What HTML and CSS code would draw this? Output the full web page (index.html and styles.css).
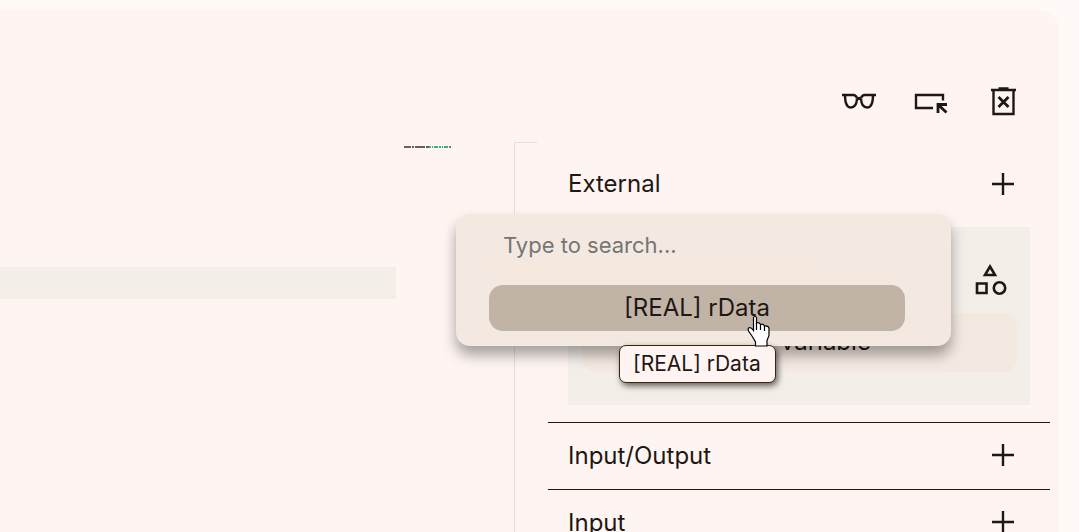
FILE: index.html
```
<!DOCTYPE html>
<html lang="en">
<head>
  <meta charset="UTF-8" />
  <meta name="viewport" content="width=device-width, initial-scale=1" />
  <title>Variables</title>
  <link rel="stylesheet" href="styles.css">
</head>
<body>

  <main class="panel">
    <!-- Toolbar -->
    <div class="toolbar">
      <button class="icon-button" aria-label="View">
        <svg width="36" height="36" viewBox="0 0 36 36" fill="none" stroke="#1f1713" stroke-width="2.4">
          <path d="M1 12h11.500c1.500 0 2.500 .8 3.300 2.800M35 12H23.500c-1.500 0-2.500 .8-3.300 2.800" />
          <path d="M4 12c0 8 1.500 12.500 5.800 12.500 4.500 0 6-4.500 6.200-9M32 12c0 8-1.500 12.500-5.800 12.500-4.500 0-6-4.500-6.200-9" />
          <path d="M15.500 15.500h5" stroke-width="3.200" />
        </svg>
      </button>
      <button class="icon-button" aria-label="Select block">
        <svg width="36" height="36" viewBox="0 0 36 36" fill="none" stroke="#1f1713" stroke-width="2.400">
          <path d="M20 25H3V12h27v5.500" />
          <path d="M25 30v-8.500h9M25.500 22l8 7.500" stroke-width="2.800" />
        </svg>
      </button>
      <button class="icon-button" aria-label="Delete">
        <svg width="36" height="36" viewBox="0 0 36 36" fill="none" stroke="#1f1713" stroke-width="2.400">
          <path d="M6 7h25M13.500 5.500h10M8.500 7v24h20V7" />
          <path d="M13.500 14l10 10M23.500 14l-10 10" stroke-width="2.800" />
        </svg>
      </button>
    </div>

    <div class="workspace">
      <!-- Editor -->
      <div class="editor">
        <div class="code">
          <div class="current-line"></div>
        </div>
        <div class="minimap">
          <svg width="48" height="4" viewBox="0 0 48 4" fill="none" stroke-width="2">
            <path d="M0 2h25" stroke="#6b5f5b" stroke-dasharray="7 1 2 1 10 1 5 1" />
            <path d="M25 2h21" stroke="#3fae84" stroke-dasharray="2 1 1 1 4 1" />
            <path d="M46 2h1" stroke="#6b5f5b" />
          </svg>
        </div>
        <div class="ruler"></div>
      </div>

      <!-- Variable sections -->
      <aside class="sidebar">
        <section class="group">
          <div class="group-header first">
            <span>External</span>
            <button class="add" aria-label="Add external">
              <svg width="24" height="24" viewBox="0 0 24 24" stroke="#1f1713" stroke-width="2.400"><path d="M12 1v22M1 12h22" /></svg>
            </button>
          </div>

          <div class="group-body">
            <button class="icon-button shapes" aria-label="Type">
              <svg width="36" height="36" viewBox="0 0 36 36" fill="none" stroke="#1f1713" stroke-width="2.600">
                <path d="M17 5.500l5 8.500H12zM4 22.500h9.500v9.500H4z" />
                <circle cx="26.500" cy="27" r="5.700" />
              </svg>
            </button>
            <button class="variable">Add variable</button>
          </div>

          <div class="popup">
            <input type="text" class="search" placeholder="Type to search..." aria-label="Search variables" />
            <button class="option">[REAL] rData</button>
            <div class="tooltip" role="tooltip">[REAL] rData</div>
            <svg class="cursor" width="24" height="32" viewBox="0 0 24 32" fill="#fff" stroke="#000" stroke-width="1.200">
              <path d="M6.500 2.500q1.500-2.500 3 0V8q2.500-1 4 1.500 2.500-1 4 1.500 4-.5 4.500 2.500v7l-2 5v5.500H8.500V27L5 21 1.500 16q-1-3 1-3.500 2 0 4 3z" />
              <path d="M9.500 8v7M13.500 9.500V15M17.500 11v5" />
            </svg>
          </div>
        </section>

        <section class="group">
          <div class="group-header">
            <span>Input/Output</span>
            <button class="add" aria-label="Add input/output">
              <svg width="24" height="24" viewBox="0 0 24 24" stroke="#1f1713" stroke-width="2.400"><path d="M12 1v22M1 12h22" /></svg>
            </button>
          </div>
        </section>

        <section class="group">
          <div class="group-header">
            <span>Input</span>
            <button class="add" aria-label="Add input">
              <svg width="24" height="24" viewBox="0 0 24 24" stroke="#1f1713" stroke-width="2.400"><path d="M12 1v22M1 12h22" /></svg>
            </button>
          </div>
        </section>
      </aside>
    </div>
  </main>

</body>
</html>
```
FILE: styles.css
```
body {
  margin: 0;
  height: 100vh;
  overflow: hidden;
  background: #fffaf7;
  color: #1f1713;
  font-family: Inter, sans-serif;
  font-size: 24px;
}

button, input {
  margin: 0;
  padding: 0;
  border: none;
  background: none;
  color: inherit;
  font: inherit;
}

button {
  cursor: pointer;
}

svg {
  display: block;
}

.panel {
  box-sizing: border-box;
  min-height: 100%;
  margin: 10px 20px 0 0;
  padding-right: 9px;
  border-top-right-radius: 20px;
  background: #fef5f2;
}

/* Toolbar */
.toolbar {
  display: flex;
  justify-content: flex-end;
  gap: 36px;
  padding: 73px 29px 23px 0;
}

/* Editor */
.workspace {
  display: grid;
  grid-template-columns: minmax(0, 1fr) 502px;
  gap: 11px;
}

.editor {
  display: grid;
  grid-template-columns: minmax(0, 1fr) 110px 23px;
}

.code {
  margin-right: 8px;
  padding-top: 125px;
}

.current-line {
  height: 32px;
  background: #f3eee8;
}

.minimap {
  padding-top: 3px;
}

.ruler {
  box-sizing: border-box;
  border-top: 1px solid #e5dfdc;
  border-left: 1px solid #e5dfdc;
}

/* Sidebar */
.group {
  position: relative;
}

.group + .group {
  border-top: 1px solid #2a1506;
}

.group-header {
  box-sizing: border-box;
  display: flex;
  justify-content: space-between;
  align-items: center;
  height: 66px;
  padding: 0 35px 2px 20px;
}

.group-header.first {
  height: 85px;
}

.group-body {
  box-sizing: border-box;
  display: flex;
  flex-direction: column;
  gap: 16px;
  margin: 0 20px 17px;
  padding: 34px 13px 33px 14px;
  background: #f3eee8;
}

.shapes {
  align-self: flex-end;
  margin-right: 8px;
}

.variable {
  height: 59px;
  padding-bottom: 2px;
  border-radius: 14px;
  background: #f3e9e0;
}

/* Search popup */
.popup {
  box-sizing: border-box;
  position: absolute;
  top: 72px;
  right: 99px;
  width: 495px;
  padding: 8px 46px 15px 33px;
  border-radius: 14px;
  background: #f3e9e0;
  box-shadow: 0 9px 14px rgba(0, 0, 0, 0.35);
}

.search {
  display: block;
  box-sizing: border-box;
  width: 328px;
  height: 48px;
  padding: 0 14px 2px 12px;
  border: 2px solid #f3e9e0;
  border-bottom-color: #fae8d8;
  font-size: 22px;
}

.search::placeholder {
  color: #757575;
}

.option {
  display: block;
  width: 100%;
  height: 46px;
  margin-top: 15px;
  padding-bottom: 2px;
  border-radius: 14px;
  background: #c1b4a6;
}

.tooltip {
  position: absolute;
  top: 131px;
  left: 163px;
  padding: 5px 14px 6px 13px;
  border: 1px solid #3a2410;
  border-radius: 7px;
  background: #fef5f2;
  box-shadow: 2px 3px 6px rgba(0, 0, 0, 0.6);
  font-size: 21px;
  line-height: 25px;
  white-space: nowrap;
}

.cursor {
  position: absolute;
  top: 101px;
  left: 291px;
}
```
